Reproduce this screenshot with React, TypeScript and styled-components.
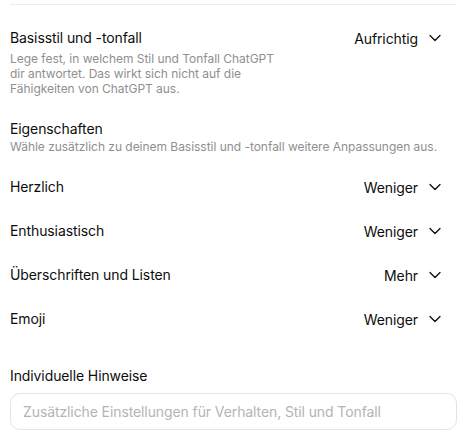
import React from 'react'
import styled, { createGlobalStyle } from 'styled-components'

const GlobalStyle = createGlobalStyle`
    * { box-sizing: border-box; }
    body {
        margin: 0;
        background: #ffffff;
        font-family: Inter, "Noto Sans", sans-serif;
        color: #0d0d0d;
        -webkit-font-smoothing: antialiased;
    }
`

const Panel = styled.div`
    padding: 4px 10px 0;
    width: 467px;
`

const Divider = styled.div`
    height: 1px;
    background: #ececec;
`

const BaseSection = styled.section`
    display: flex;
    justify-content: space-between;
    align-items: flex-start;
    margin-top: 23px;
`

const Label = styled.div`
    font-size: 14px;
    line-height: 20px;
    letter-spacing: -0.1px;
`

const Hint = styled.div<{ $maxWidth?: string; $gap?: number }>`
    font-size: 12px;
    line-height: 15px;
    color: #8f8f8f;
    letter-spacing: -0.03px;
    margin-top: ${p => p.$gap || 0}px;
    max-width: ${p => p.$maxWidth || 'none'};
`

const Group = styled.section`
    margin-top: 23px;
`

const Rows = styled.div`
    margin-top: 11px;
`

const Row = styled.div`
    display: flex;
    justify-content: space-between;
    align-items: center;
    height: 44px;
`

const Select = styled.button`
    display: flex;
    align-items: center;
    gap: 11px;
    height: 20px;
    padding: 0 16px 0 0;
    border: none;
    background: none;
    font: inherit;
    font-size: 14px;
    letter-spacing: -0.1px;
    color: #0d0d0d;
    cursor: pointer;
`

const Notes = styled.section`
    margin-top: 25px;
`

const Input = styled.input`
    display: block;
    width: 100%;
    height: 37px;
    margin-top: 7px;
    padding: 0 12px;
    border: 1px solid #e3e3e3;
    border-radius: 10px;
    font: inherit;
    font-size: 14px;
    letter-spacing: -0.1px;
    color: #0d0d0d;
    outline: none;
    &::placeholder {
        color: #b4b4b4;
    }
`

function Chevron() {
    return (
        <svg width="12" height="8" viewBox="0 0 12 8" fill="none">
            <path d="M1 1.5 L6 6.5 L11 1.5" stroke="#0d0d0d" strokeWidth="1.3" strokeLinecap="round" strokeLinejoin="round" />
        </svg>
    )
}

const traits = [
    { name: 'Herzlich', value: 'Weniger' },
    { name: 'Enthusiastisch', value: 'Weniger' },
    { name: 'Überschriften und Listen', value: 'Mehr' },
    { name: 'Emoji', value: 'Weniger' },
]

function App() {
    return (
        <Panel>
            <GlobalStyle />
            <Divider />
            <BaseSection>
                <div>
                    <Label>Basisstil und -tonfall</Label>
                    <Hint $maxWidth="275px" $gap={3}>Lege fest, in welchem Stil und Tonfall ChatGPT dir antwortet. Das wirkt sich nicht auf die Fähigkeiten von ChatGPT aus.</Hint>
                </div>
                <Select>
                    Aufrichtig
                    <Chevron />
                </Select>
            </BaseSection>
            <Group>
                <Label>Eigenschaften</Label>
                <Hint>Wähle zusätzlich zu deinem Basisstil und -tonfall weitere Anpassungen aus.</Hint>
                <Rows>
                    {traits.map(t => (
                        <Row key={t.name}>
                            <Label>{t.name}</Label>
                            <Select>
                                {t.value}
                                <Chevron />
                            </Select>
                        </Row>
                    ))}
                </Rows>
            </Group>
            <Notes>
                <Label>Individuelle Hinweise</Label>
                <Input placeholder="Zusätzliche Einstellungen für Verhalten, Stil und Tonfall" />
            </Notes>
        </Panel>
    )
}

export default App
